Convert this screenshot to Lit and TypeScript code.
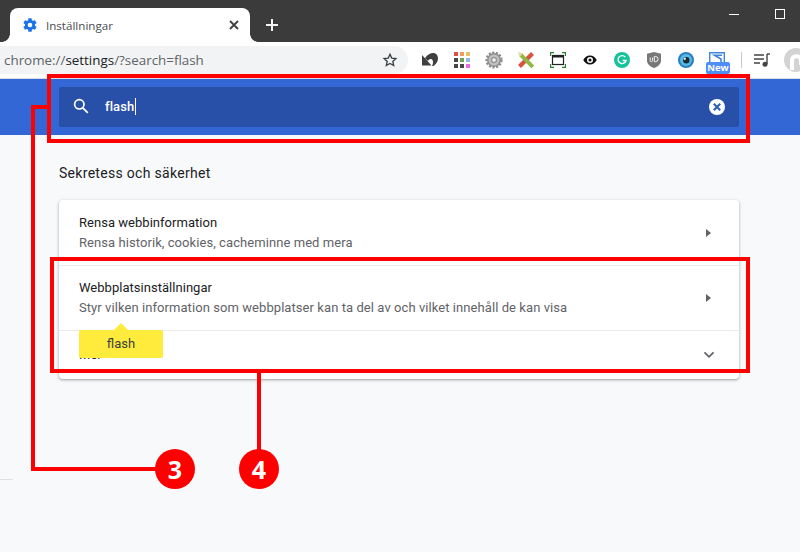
import { LitElement, html, css, svg } from "lit";
import { customElement } from "lit/decorators.js";

const I = {
  gear: svg`<svg width="16" height="16" viewBox="0 0 24 24"><path fill="#1a73e8" d="M19.4 13c.04-.32.1-.66.1-1s-.03-.67-.07-1l2.1-1.65a.5.5 0 0 0 .12-.64l-2-3.46a.5.5 0 0 0-.61-.22l-2.49 1a7.3 7.3 0 0 0-1.69-.98l-.38-2.65A.49.49 0 0 0 14 2h-4a.49.49 0 0 0-.49.42l-.38 2.65c-.61.25-1.17.59-1.69.98l-2.49-1a.5.5 0 0 0-.61.22l-2 3.46a.49.49 0 0 0 .12.64L4.57 11c-.04.33-.07.66-.07 1s.03.67.07 1l-2.11 1.65a.5.5 0 0 0-.12.64l2 3.46c.12.22.39.3.61.22l2.49-1c.52.4 1.08.73 1.69.98l.38 2.65c.03.24.24.42.49.42h4c.25 0 .46-.18.49-.42l.38-2.65c.61-.25 1.17-.59 1.69-.98l2.49 1c.22.08.49 0 .61-.22l2-3.46a.5.5 0 0 0-.12-.64L19.4 13zM12 15.5a3.5 3.5 0 1 1 0-7 3.5 3.5 0 0 1 0 7z"/></svg>`,
  close: svg`<svg width="12" height="12" viewBox="0 0 12 12"><path d="M2 2l8 8M10 2l-8 8" stroke="#3c4043" stroke-width="1.8"/></svg>`,
  plus: svg`<svg width="14" height="14" viewBox="0 0 14 14"><path d="M7 1v12M1 7h12" stroke="#f1f3f4" stroke-width="2"/></svg>`,
  star: svg`<svg width="16" height="16" viewBox="0 0 24 24"><path fill="none" stroke="#3c4043" stroke-width="2" d="M12 3.5l2.6 5.7 6.2.7-4.6 4.2 1.3 6.1L12 17.1l-5.5 3.1 1.3-6.1-4.6-4.2 6.2-.7z"/></svg>`,
  undo: svg`<svg width="18" height="16" viewBox="0 0 18 16"><path fill="#3f3f3f" d="M1 3v10.500h9.500zM4 6C6.500 2.500 9.500 1 12 1c3.500 0 5 2.500 5 5.500s-2 6-4.500 7.500H11c1.500-2.500 1.500-6.500-1-7-1.500-.3-2.500.8-3 2z"/></svg>`,
  grid: svg`<svg width="16" height="16" viewBox="0 0 16 16"><rect x="0" y="0" width="4" height="4" fill="#de5246"/><rect x="6" y="0" width="4" height="4" fill="#f6995c"/><rect x="12" y="0" width="4" height="4" fill="#e2c264"/><rect x="0" y="6" width="4" height="4" fill="#474747"/><rect x="6" y="6" width="4" height="4" fill="#6aa84f"/><rect x="12" y="6" width="4" height="4" fill="#8fb8e4"/><rect x="0" y="12" width="4" height="4" fill="#474747"/><rect x="6" y="12" width="4" height="4" fill="#474747"/><rect x="12" y="12" width="4" height="4" fill="#ec6ae0"/></svg>`,
  cog: svg`<svg width="18" height="18" viewBox="0 0 18 18"><circle cx="9" cy="9" r="7" fill="#8c8c8c"/><circle cx="9" cy="9" r="7.600" fill="none" stroke="#8a8a8a" stroke-width="2" stroke-dasharray="2.200 1.550"/><circle cx="9" cy="9" r="5.500" fill="#c2c2c2"/><circle cx="9" cy="9" r="3.300" fill="#9a9a9a"/><circle cx="9" cy="9" r="1.800" fill="#f2f2f2"/></svg>`,
  pencil: svg`<svg width="18" height="18" viewBox="0 0 18 18"><path d="M15.500 2.500L2.500 15.500" stroke="#d9533f" stroke-width="4.200"/><path d="M3.800 3.800L15.800 15.800" stroke="#8fb944" stroke-width="4"/><path d="M1 1l5 1.500L2.500 6z" fill="#e4d7a0"/></svg>`,
  shot: svg`<svg width="16" height="16" viewBox="0 0 16 16"><path d="M.5 4V.5H4M12 .5h3.500V4M.5 12v3.500H4M12 15.500h3.500V12" fill="none" stroke="#2e7d32" stroke-width="1.400"/><rect x="2.500" y="3.500" width="11" height="9" fill="none" stroke="#222" stroke-width="1.200"/><rect x="2.500" y="3.500" width="11" height="2" fill="#222"/></svg>`,
  eye: svg`<svg width="14" height="10" viewBox="0 0 14 10"><path fill-rule="evenodd" fill="#111" d="M7 .5C4 .5 1.500 2.300 .3 5c1.200 2.700 3.700 4.500 6.700 4.500s5.500-1.800 6.700-4.500C12.500 2.300 10 .5 7 .5zM7 8a3 3 0 1 1 0-6 3 3 0 0 1 0 6z"/><circle cx="7" cy="5" r="1.500" fill="#111"/></svg>`,
  gram: svg`<svg width="16" height="16" viewBox="0 0 16 16"><circle cx="8" cy="8" r="8" fill="#15c39a"/><path d="M11.300 5.200A4 4 0 1 0 12 8.500H8.700" fill="none" stroke="#fff" stroke-width="1.400"/></svg>`,
  shield: svg`<svg width="14" height="16" viewBox="0 0 14 16"><path fill="#777" d="M7 0l7 1.800v6.700c0 3.400-3 6.100-7 7.500-4-1.400-7-4.100-7-7.500V1.800z"/><path d="M3.200 5.500v3c0 1.500 2.400 1.500 2.400 0v-3M7.300 4.500v5.200h1.200a2.600 2.600 0 0 0 0-5.200z" fill="none" stroke="#fff" stroke-width=".9"/></svg>`,
  ball: svg`<svg width="16" height="16" viewBox="0 0 16 16"><circle cx="8" cy="8" r="8" fill="#2a7fc0"/><circle cx="8" cy="8" r="6" fill="#55bbe4"/><circle cx="8.300" cy="8.300" r="3.200" fill="#1c2a38"/><circle cx="6.800" cy="6.800" r="1.200" fill="#cfe8f5"/></svg>`,
  sbox: svg`<svg width="16" height="11" viewBox="0 0 16 11"><path d="M.7 11V.7h14.600V11" fill="none" stroke="#3f86d8" stroke-width="1.400"/><path d="M13 3.300H5.500L12 7v4" fill="none" stroke="#3f86d8" stroke-width="1.600"/></svg>`,
  music: svg`<svg width="16" height="14" viewBox="0 0 16 14"><path d="M0 2h10M0 6h10M0 10h6" stroke="#444" stroke-width="1.400"/><path d="M13 1v10" stroke="#444" stroke-width="1.400"/><path d="M13 1h3" stroke="#444" stroke-width="1.400"/><circle cx="11" cy="11.300" r="2.500" fill="#444"/></svg>`,
  avatar: svg`<svg width="24" height="24" viewBox="0 0 24 24"><circle cx="12" cy="12" r="12" fill="#d3d3d3"/><path d="M8 22V11a5 5 0 0 1 9 0v6" fill="none" stroke="#fff" stroke-width="4"/></svg>`,
  search: svg`<svg width="18" height="18" viewBox="0 0 18 18"><circle cx="7.300" cy="7.300" r="4.700" fill="none" stroke="#fff" stroke-width="1.700"/><path d="M10.800 10.800l5 5" stroke="#fff" stroke-width="1.800"/></svg>`,
  clear: svg`<svg width="16" height="16" viewBox="0 0 16 16"><circle cx="8" cy="8" r="8" fill="#fff"/><path d="M4.800 4.800l6.400 6.400M11.200 4.800l-6.400 6.400" stroke="#2f5db8" stroke-width="2.100"/></svg>`,
  arrow: svg`<svg width="5" height="8" viewBox="0 0 5 8"><path d="M0 0L5 4 0 8z" fill="#5f6368"/></svg>`,
  chev: svg`<svg width="12" height="8" viewBox="0 0 12 8"><path d="M1.500 1.300l4.500 4.500 4.500-4.500" fill="none" stroke="#5f6368" stroke-width="1.800"/></svg>`,
};

@customElement("app-root")
export class AppRoot extends LitElement {
  static styles = css`
    :host { display: block; position: relative; width: 800px; height: 552px; overflow: hidden; background: #f8f9fa; font-family: Roboto, "Liberation Sans", sans-serif; }
    .strip { height: 42px; background: #3b3b3b; display: flex; align-items: flex-end; padding-left: 10px; box-sizing: border-box; position: relative; }
    .tab { position: relative; width: 240px; height: 34px; background: #fff; border-radius: 8px 8px 0 0; display: flex; align-items: center; padding: 0 10px 0 12px; box-sizing: border-box; font: 12px "Open Sans", sans-serif; color: #4a4d51; }
    .tab::before, .tab::after { content: ""; position: absolute; bottom: 0; width: 8px; height: 8px; }
    .tab::before { left: -8px; background: radial-gradient(circle at 0 0, transparent 7.5px, #fff 8px); }
    .tab::after { right: -8px; background: radial-gradient(circle at 100% 0, transparent 7.5px, #fff 8px); }
    .tab svg { display: block; }
    .tab-title { margin-left: 8px; flex: 1; font-size: 11.6px; }
    .plus { margin: 0 0 10px 15px; display: flex; }
    .win { position: absolute; top: 9px; right: 15px; display: flex; align-items: center; gap: 36px; }
    .min { width: 10px; height: 1px; background: #fff; }
    .max { width: 8px; height: 8px; border: 1px solid #fff; }
    .toolbar { height: 36px; background: #fff; display: flex; align-items: center; border-bottom: 1px solid #dadce0; }
    .omni { width: 408px; height: 28px; flex: none; box-sizing: border-box; margin: -1px 6px 0 0; background: #f1f3f4; border-radius: 0 14px 14px 0; display: flex; align-items: center; justify-content: space-between; padding: 0 10px 0 4px; font: 13.4px "Open Sans", sans-serif; color: #5f6368; }
    .omni b { font-weight: 400; color: #202124; }
    .ico { width: 32px; height: 36px; flex: none; display: flex; align-items: center; justify-content: center; position: relative; }
    .ico svg { display: block; }
    .ico.s { justify-content: flex-start; align-items: flex-start; padding: 10px 0 0 7px; box-sizing: border-box; }
    .ico.av { margin-left: 2px; }
    .badge { position: absolute; left: 4px; top: 20px; width: 24px; height: 12px; border-radius: 2px; background: #4e8ef7; color: #fff; font: 700 9.5px/12px "Open Sans", sans-serif; text-align: center; }
    .sep { width: 1px; height: 16px; background: #c8c8c8; flex: none; margin: 0 4px 0 7px; }
    .head { height: 56px; background: #3367d6; padding: 8px 0 0 59px; box-sizing: border-box; }
    .search { width: 680px; height: 40px; background: #2850a8; border-radius: 2px; display: flex; align-items: center; padding: 0 14px 0 13px; box-sizing: border-box; color: #fff; font-size: 13px; font-weight: 500; }
    .search > svg:first-child { margin-top: -2px; }
    .search .q { margin: -2px 0 0 15px; flex: 1; display: flex; align-items: center; letter-spacing: .1px; }
    .caret { width: 1px; height: 17px; background: #fff; margin-left: 1px; }
    .main { width: 680px; margin-left: 59px; }
    .sec { margin: 29px 0 18px; font-size: 14px; line-height: 18px; color: #202124; letter-spacing: .3px; height: 18px; }
    .card { background: #fff; border-radius: 4px; padding-top: 1px; box-shadow: 0 1px 2px rgba(60,64,67,.3), 0 1px 3px 1px rgba(60,64,67,.15); }
    .row { height: 65px; box-sizing: border-box; padding: 0 28px 0 20px; display: flex; align-items: center; justify-content: space-between; font-size: 13px; border-bottom: 1px solid #e8eaed; }
    .row.last { height: 48px; border: 0; padding-right: 24px; }
    .t { color: #202124; line-height: 20px; letter-spacing: .03px; }
    .d { color: #5f6368; line-height: 20px; letter-spacing: .07px; }
    .tip { position: absolute; left: 79px; top: 330px; width: 84px; height: 28px; padding-bottom: 2px; box-sizing: border-box; background: #ffeb3b; border-radius: 2px; color: #3c4043; font-size: 13px; display: flex; align-items: center; justify-content: center; }
    .tip::before { content: ""; position: absolute; left: 35px; top: -7px; border: 7px solid transparent; border-top: 0; border-bottom-color: #ffeb3b; }
    .hr { position: absolute; left: 0; top: 479px; width: 13px; height: 1px; background: #e0e0e0; }
    .box { position: absolute; border: 4px solid #f00; box-sizing: border-box; }
    .b1 { left: 47px; top: 74px; width: 703px; height: 69px; }
    .b2 { left: 50px; top: 257px; width: 700px; height: 116px; }
    .l { position: absolute; background: #f00; }
    .l1 { left: 31px; top: 105px; width: 16px; height: 4px; }
    .l2 { left: 31px; top: 105px; width: 4px; height: 366px; }
    .l3 { left: 31px; top: 467px; width: 130px; height: 4px; }
    .l4 { left: 257px; top: 373px; width: 4px; height: 80px; }
    .num { position: absolute; top: 449px; width: 40px; height: 40px; border-radius: 50%; background: #f00; color: #fff; font: 700 25px/40px "Open Sans", sans-serif; text-align: center; }
    .n3 { left: 155px; }
    .n4 { left: 239px; }
  `;

  render() {
    const ico = (i: unknown) => html`<div class="ico">${i}</div>`;
    return html`
      <div class="strip">
        <div class="tab">${I.gear}<span class="tab-title">Inställningar</span>${I.close}</div>
        <div class="plus">${I.plus}</div>
        <div class="win"><div class="min"></div><div class="max"></div></div>
      </div>
      <div class="toolbar">
        <div class="omni"><span>chrome://<b>settings</b>/?search=flash</span>${I.star}</div>
        ${ico(I.undo)}${ico(I.grid)}${ico(I.cog)}${ico(I.pencil)}${ico(I.shot)}${ico(I.eye)}${ico(I.gram)}${ico(I.shield)}${ico(I.ball)}
        <div class="ico s">${I.sbox}<span class="badge">New</span></div>
        <div class="sep"></div>
        ${ico(I.music)}<div class="ico av">${I.avatar}</div>
      </div>
      <div class="head">
        <div class="search">${I.search}<div class="q">flash<span class="caret"></span></div>${I.clear}</div>
      </div>
      <div class="main">
        <div class="sec">Sekretess och säkerhet</div>
        <div class="card">
          <div class="row"><div><div class="t">Rensa webbinformation</div><div class="d">Rensa historik, cookies, cacheminne med mera</div></div>${I.arrow}</div>
          <div class="row"><div><div class="t">Webbplatsinställningar</div><div class="d">Styr vilken information som webbplatser kan ta del av och vilket innehåll de kan visa</div></div>${I.arrow}</div>
          <div class="row last"><div class="t">Mer</div>${I.chev}</div>
        </div>
      </div>
      <div class="tip">flash</div>
      <div class="hr"></div>
      <div class="box b1"></div><div class="box b2"></div>
      <div class="l l1"></div><div class="l l2"></div><div class="l l3"></div><div class="l l4"></div>
      <div class="num n3">3</div><div class="num n4">4</div>
    `;
  }
}
